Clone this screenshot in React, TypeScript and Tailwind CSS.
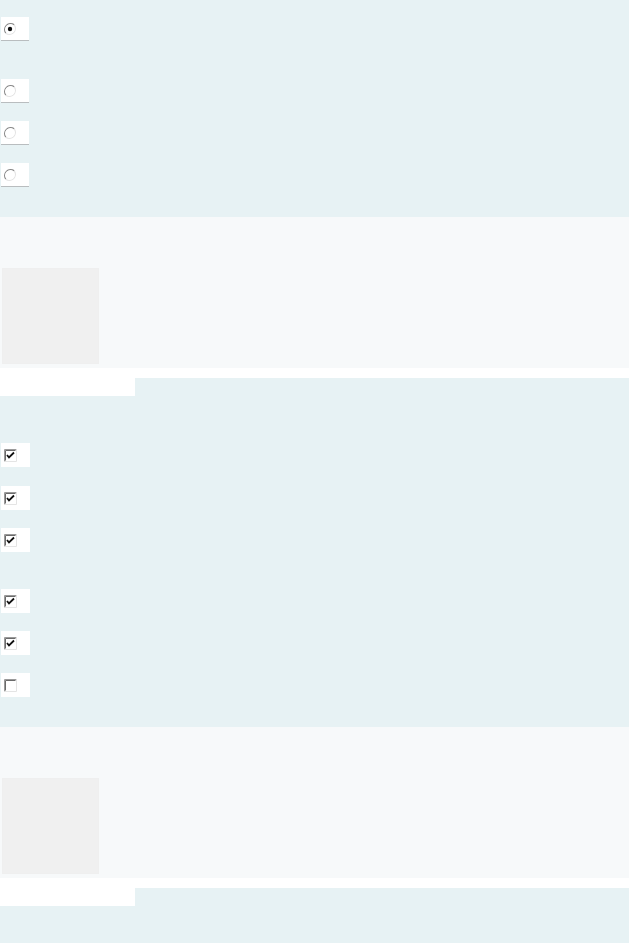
import React from 'react';

function RadioGlyph({ checked }: { checked: boolean }) {
  return (
    <svg width="12" height="12" viewBox="0 0 12 12" className="block">
      <path d="M10.2 1.8A6 6 0 0 0 1.8 10.2" fill="none" stroke="#8a8a8a" strokeWidth="1.2" />
      <path d="M1.8 10.2A6 6 0 0 0 10.2 1.8" fill="none" stroke="#e4e4e4" strokeWidth="1.2" />
      <circle cx="6" cy="6" r="4.6" fill="#ffffff" />
      {checked && <circle cx="6" cy="6" r="2.2" fill="#111111" />}
    </svg>
  );
}

function CheckGlyph({ checked }: { checked: boolean }) {
  return (
    <svg width="13" height="13" viewBox="0 0 13 13" className="block">
      <rect x="0" y="0" width="13" height="13" fill="#ffffff" />
      <path d="M0.5 12.5V0.5H12.5" fill="none" stroke="#9a9a9a" strokeWidth="1" />
      <path d="M1.5 11.5V1.5H11.5" fill="none" stroke="#6a6a6a" strokeWidth="1" />
      <path d="M0.5 12.5H12.5V0.5" fill="none" stroke="#e4e4e4" strokeWidth="1" />
      {checked && (
        <path d="M3 6l2 2.5L10 3.5" fill="none" stroke="#111111" strokeWidth="1.8" />
      )}
    </svg>
  );
}

function RadioRow({ checked = false, className = '' }: { checked?: boolean; className?: string }) {
  return (
    <div className={`ml-[1px] w-[28px] h-[24px] bg-white border-b border-[#b9bdbf] flex items-center pl-[3px] ${className}`}>
      <RadioGlyph checked={checked} />
    </div>
  );
}

function CheckRow({ checked = true, className = '' }: { checked?: boolean; className?: string }) {
  return (
    <div className={`ml-[1px] w-[29px] h-[24px] bg-white flex items-center pl-[3px] ${className}`}>
      <CheckGlyph checked={checked} />
    </div>
  );
}

function Placeholder() {
  return (
    <section className="bg-[#f7f9fa] h-[151px] pt-[51px]">
      <div className="ml-[2px] w-[97px] h-[96px] bg-[#f0f0f0] border border-[#efefef]" />
    </section>
  );
}

export default function App() {
  return (
    <div className="min-h-screen bg-[#e7f2f4]">
      {/* radio group */}
      <section className="bg-[#e7f2f4] pt-[17px] pb-[30px] flex flex-col">
        <RadioRow checked />
        <RadioRow className="mt-[38px]" />
        <RadioRow className="mt-[18px]" />
        <RadioRow className="mt-[18px]" />
      </section>

      <Placeholder />
      <div className="h-[10px] bg-white" />

      {/* checkbox group */}
      <section className="bg-[#e7f2f4] pb-[30px] flex flex-col">
        <div className="w-[135px] h-[18px] bg-white" />
        <CheckRow className="mt-[47px]" />
        <CheckRow className="mt-[19px]" />
        <CheckRow className="mt-[18px]" />
        <CheckRow className="mt-[37px]" />
        <CheckRow className="mt-[18px]" />
        <CheckRow className="mt-[18px]" checked={false} />
      </section>

      <Placeholder />
      <div className="h-[10px] bg-white" />
      <section className="bg-[#e7f2f4] h-[60px]">
        <div className="w-[135px] h-[18px] bg-white" />
      </section>
    </div>
  );
}
